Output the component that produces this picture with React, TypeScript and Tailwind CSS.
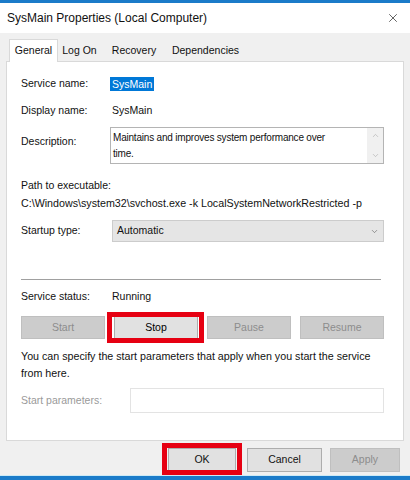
import { X, ChevronDown, ChevronUp } from 'lucide-react';

const font = "font-['Liberation_Sans',Arial,sans-serif]";

const Row = ({ label, children, className = '' }: { label: string; children: React.ReactNode; className?: string }) => (
  <div className={`flex items-center ${className}`}>
    <div className="w-[91px] shrink-0">{label}</div>
    {children}
  </div>
);

const ServiceButton = ({ label, enabled = false }: { label: string; enabled?: boolean }) => (
  <div
    className={`h-[23px] flex items-center justify-center border ${
      enabled ? 'bg-[#e1e1e1] border-[#adadad] text-black' : 'bg-[#cccccc] border-[#bfbfbf] text-[#8c8c8c]'
    }`}
  >
    {label}
  </div>
);

export default function App() {
  return (
    <div className={`w-[410px] h-[480px] flex flex-col bg-[#f0f0f0] overflow-hidden text-[10.5px] text-[#111] ${font}`}>
      <div className="h-[3px] bg-[#1b7bc9]" />

      <div className="h-[30px] bg-white flex items-center justify-between pl-[7px] pr-[10px]">
        <span className="text-[12px] text-[#111]">SysMain Properties (Local Computer)</span>
        <X className="w-[14px] h-[14px] text-[#222]" strokeWidth={1.2} />
      </div>

      <div className="px-[6px] pt-[5px]">
        <div className="flex h-[23px] items-end">
          <div className="ml-[3px] w-[49px] h-[23px] bg-white border-x border-t border-[#d9d9d9] flex items-center justify-center -mb-px relative z-10">
            General
          </div>
          <div className="w-[43px] h-[20px] flex items-center justify-center">Log On</div>
          <div className="w-[66px] h-[20px] flex items-center justify-center">Recovery</div>
          <div className="w-[77px] h-[20px] flex items-center justify-center">Dependencies</div>
        </div>

        <div className="h-[380px] bg-white border border-[#d9d9d9] pl-[14px] pr-[19px] pt-[12px]">
          <Row label="Service name:" className="h-[20px]">
            <span className="-ml-[2px] px-[2px] h-[14px] leading-[14px] bg-[#0078d7] text-white">SysMain</span>
          </Row>
          <Row label="Display name:" className="h-[20px] mt-[7px]">
            <span>SysMain</span>
          </Row>

          <div className="flex mt-[6px]">
            <div className="w-[91px] shrink-0 pt-[7px]">Description:</div>
            <div className="-ml-[2px] flex-1 h-[37px] border border-[#b4b4b4] flex">
              <div className="flex-1 pl-[2px] pt-[2px] leading-[16px] text-[10px] tracking-[-0.2px]">
                Maintains and improves system performance over
                <br />
                time.
              </div>
              <div className="w-[16px] bg-[#f0f0f0] flex flex-col items-center justify-between py-[3px] text-[#a6a6a6]">
                <ChevronUp className="w-[9px] h-[9px]" strokeWidth={1.5} />
                <ChevronDown className="w-[9px] h-[9px]" strokeWidth={1.5} />
              </div>
            </div>
          </div>

          <div className="mt-[12px] leading-[18px]">Path to executable:</div>
          <div className="leading-[18px] text-[10.7px]">
            C:\Windows\system32\svchost.exe -k LocalSystemNetworkRestricted -p
          </div>

          <Row label="Startup type:" className="mt-[8px] h-[22px]">
            <div className="flex-1 h-[22px] bg-[#e5e5e5] border border-[#cccccc] flex items-center justify-between pl-[4px] pr-[4px]">
              <span>Automatic</span>
              <ChevronDown className="w-[9px] h-[9px] text-[#555]" strokeWidth={1.5} />
            </div>
          </Row>

          <div className="mt-[37px] mr-[3px] h-px bg-[#a0a0a0]" />

          <Row label="Service status:" className="mt-[8px] h-[18px]">
            <span>Running</span>
          </Row>

          <div className="mt-[10px] grid grid-cols-[84px_84px_84px_84px] gap-x-[9px]">
            <ServiceButton label="Start" />
            <div className="relative">
              <ServiceButton label="Stop" enabled />
              <div className="absolute -left-[7px] -right-[6px] -top-[4px] -bottom-[4px] border-[5px] border-[#e60012]" />
            </div>
            <ServiceButton label="Pause" />
            <ServiceButton label="Resume" />
          </div>

          <p className="mt-[9px] leading-[17px] pr-[4px] text-[10.7px]">
            You can specify the start parameters that apply when you start the service from here.
          </p>

          <div className="flex items-center mt-[6px]">
            <div className="w-[109px] shrink-0 text-[#9a9a9a]">Start parameters:</div>
            <div className="flex-1 h-[25px] border border-[#e3e3e3]" />
          </div>
        </div>
      </div>

      <div className="h-[34px] flex items-start justify-end pt-[7px] pr-[10px]">
        <div className="relative w-[68px]">
          <div className="h-[24px] bg-[#e1e1e1] border border-[#adadad] flex items-center justify-center">OK</div>
          <div className="absolute -left-[6px] -right-[6px] -top-[5px] -bottom-[3px] border-[5px] border-[#e60012]" />
        </div>
        <div className="ml-[11px] w-[75px] h-[24px] bg-[#e1e1e1] border border-[#adadad] flex items-center justify-center">
          Cancel
        </div>
        <div className="ml-[8px] w-[70px] h-[24px] bg-[#cccccc] border border-[#bfbfbf] text-[#8c8c8c] flex items-center justify-center">
          Apply
        </div>
      </div>

      <div className="h-px bg-[#cdeaf5]" />
      <div className="flex-1 bg-[#1b7bc9]" />
    </div>
  );
}
